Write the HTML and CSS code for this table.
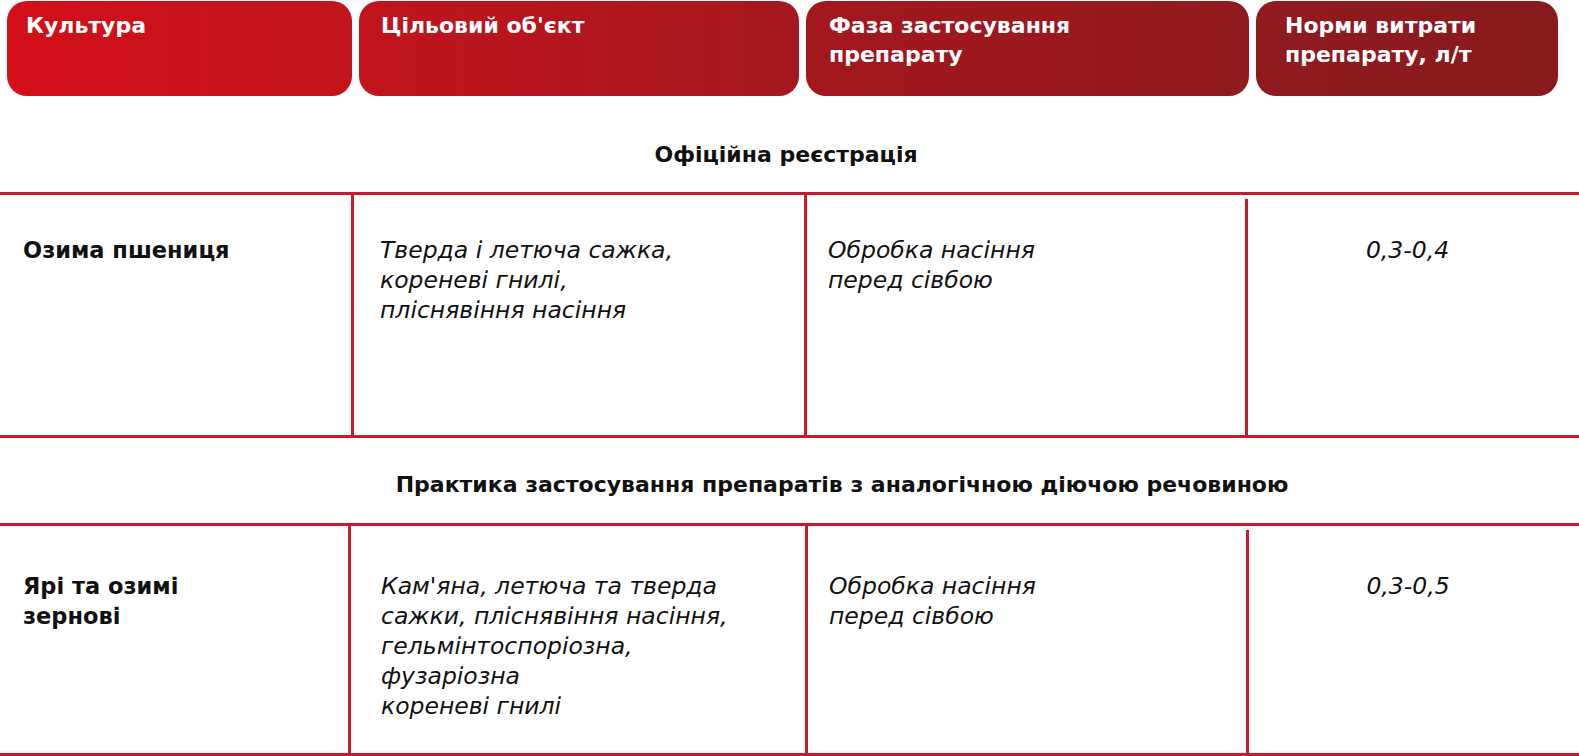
FILE: index.html
```html
<!DOCTYPE html>
<html lang="uk">
<head>
<meta charset="utf-8">
<title>Таблиця застосування</title>
<link rel="stylesheet" href="styles.css">
</head>
<body>
<div class="page">
  <div class="head">
    <div class="pill p1">Культура</div>
    <div class="pill p2">Цільовий об'єкт</div>
    <div class="pill p3">Фаза застосування<br>препарату</div>
    <div class="pill p4">Норми витрати<br>препарату, л/т</div>
  </div>

  <div class="section s1">Офіційна реєстрація</div>

  <div class="row r1">
    <div class="cell c1 name">Озима пшениця</div>
    <div class="cell c2">Тверда і летюча сажка,<br>кореневі гнилі,<br>пліснявіння насіння</div>
    <div class="cell c3">Обробка насіння<br>перед сівбою</div>
    <div class="cell c4">0,3-0,4</div>
  </div>

  <div class="section s2">Практика застосування препаратів з аналогічною діючою речовиною</div>

  <div class="row r2">
    <div class="cell c1 name">Ярі та озимі<br>зернові</div>
    <div class="cell c2">Кам'яна, летюча та тверда<br>сажки, пліснявіння насіння,<br>гельмінтоспоріозна,<br>фузаріозна<br>кореневі гнилі</div>
    <div class="cell c3">Обробка насіння<br>перед сівбою</div>
    <div class="cell c4">0,3-0,5</div>
  </div>
</div>
</body>
</html>
```

FILE: styles.css
```css
html, body {
  margin: 0;
  padding: 0;
  background: #ffffff;
}

.page {
  width: 1579px;
  font-family: "DejaVu Sans", "Liberation Sans", sans-serif;
  color: #111111;
}

.head {
  display: grid;
  grid-template-columns: 345px 440px 443px 302px;
  column-gap: 7px;
  padding-left: 7px;
  padding-top: 1px;
}

.pill {
  height: 95px;
  box-sizing: border-box;
  border-radius: 20px;
  padding-top: 10px;
  color: #ffffff;
  font-weight: 700;
  font-size: 22px;
  line-height: 29px;
  background: linear-gradient(90deg, #d30f19 0px, #c2141c 350px, #a5171f 800px, #901a1f 1250px, #881a1e 1560px) fixed;
}

.p1 { padding-left: 19px; }
.p2 { padding-left: 22px; }
.p3 { padding-left: 23px; }
.p4 { padding-left: 29px; }

.section {
  box-sizing: border-box;
  font-weight: 700;
  font-size: 22px;
  line-height: 30px;
  text-align: center;
}

.s1 {
  height: 96px;
  padding-top: 44px;
  padding-right: 7px;
}

.s2 {
  height: 85px;
  padding-top: 32px;
  padding-left: 105px;
}

.row {
  display: grid;
  border-top: 3px solid #c81a2d;
  border-bottom: 3px solid #c81a2d;
  font-size: 23.5px;
  line-height: 30px;
}

.r1 {
  grid-template-columns: 351px 453px 441px 1fr;
  height: 246px;
  box-sizing: border-box;
}

.r2 {
  grid-template-columns: 348px 457px 441px 1fr;
  height: 233px;
  box-sizing: border-box;
}

.cell {
  font-style: italic;
}

.r1 .cell { padding-top: 40px; }
.r2 .cell { padding-top: 45px; }

.cell.name {
  font-style: normal;
  font-weight: 700;
  font-size: 22.5px;
  padding-left: 23px;
}

.c2, .c3, .c4 {
  border-left: 3px solid #c81a2d;
}

.r1 .c2 { padding-left: 26px; }
.r2 .c2 { padding-left: 30px; }
.c3 { padding-left: 21px; }

.c4 {
  margin-top: 4px;
  text-align: center;
  padding-right: 12px;
}

.r1 .c4 { padding-top: 36px; }
.r2 .c4 { padding-top: 41px; }
```
